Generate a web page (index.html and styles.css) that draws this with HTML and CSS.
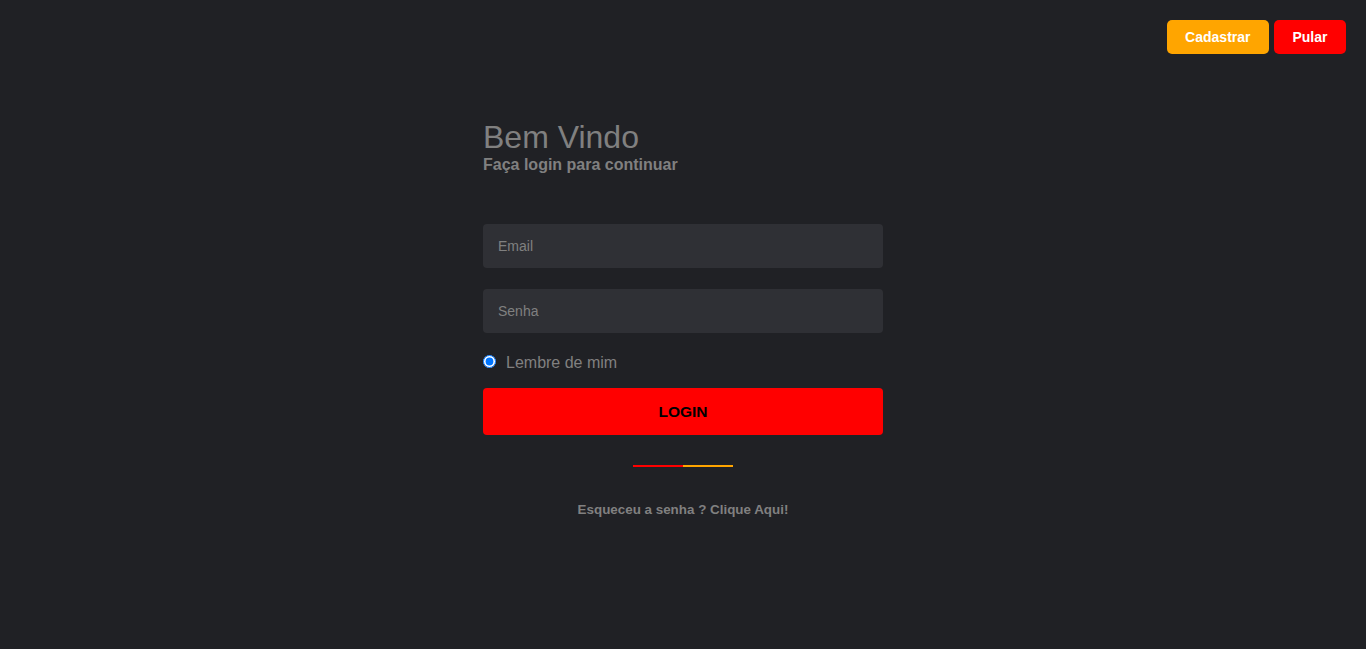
FILE: index.html
```html
<!DOCTYPE html>
<html lang="pt">
<head>
<meta charset="utf-8">
<title>Login</title>
<link rel="stylesheet" href="styles.css">
</head>
<body>
<header class="topbar">
  <button class="btn btn-orange">Cadastrar</button>
  <button class="btn btn-red">Pular</button>
</header>
<main class="login">
  <h1 class="title">Bem Vindo</h1>
  <p class="subtitle">Faça login para continuar</p>
  <form class="form">
    <input class="field" type="email" placeholder="Email">
    <input class="field" type="password" placeholder="Senha">
    <label class="remember"><input type="radio" checked class="radio"> Lembre de mim</label>
    <button type="button" class="login-btn">LOGIN</button>
  </form>
  <div class="divider"><span class="d-red"></span><span class="d-orange"></span></div>
  <p class="forgot">Esqueceu a senha ? Clique Aqui!</p>
</main>
</body>
</html>
```
FILE: styles.css
```css
html, body {
  margin: 0;
  padding: 0;
  background: #202125;
  font-family: "Liberation Sans", Arial, sans-serif;
  color: #808080;
  height: 100%;
}
.topbar {
  display: flex;
  justify-content: flex-end;
  gap: 5px;
  padding: 20px 20px 0 0;
}
.btn {
  font-family: "Liberation Sans", Arial, sans-serif;
  font-weight: bold;
  font-size: 14px;
  color: #fff;
  border: none;
  border-radius: 5px;
  height: 34px;
  padding: 0 18.5px;
}
.btn-orange { background: #ffa500; }
.btn-red { background: #ff0000; }
.login {
  width: 400px;
  margin: 0 auto;
  padding-top: 65px;
}
.title {
  font-size: 32px;
  font-weight: normal;
  margin: 0;
  line-height: 37px;
}
.subtitle {
  margin: 0;
  font-size: 16px;
  font-weight: bold;
  line-height: 18px;
}
.form {
  display: flex;
  flex-direction: column;
  margin-top: 50px;
}
.field {
  box-sizing: border-box;
  height: 44px;
  border: none;
  border-radius: 4px;
  background: #2f3035;
  padding: 0 15px;
  font-family: "Liberation Sans", Arial, sans-serif;
  font-size: 14px;
  color: #ccc;
  margin-bottom: 21px;
  outline: none;
}
.field::placeholder { color: #808080; }
.remember {
  display: flex;
  align-items: center;
  gap: 10px;
  font-size: 16px;
  margin-top: -1px;
  height: 20px;
}
.radio {
  margin: -3px 0 0 0;
  width: 13px;
  height: 13px;
}
.login-btn {
  margin-top: 15px;
  height: 47px;
  border: none;
  border-radius: 4px;
  background: #ff0000;
  color: #000;
  font-family: "Liberation Sans", Arial, sans-serif;
  font-weight: bold;
  font-size: 15.5px;
}
.divider {
  display: flex;
  justify-content: center;
  margin-top: 30px;
}
.divider span {
  display: block;
  width: 50px;
  height: 2px;
}
.d-red { background: #ff0000; }
.d-orange { background: #ffa500; }
.forgot {
  text-align: center;
  font-size: 13.4px;
  font-weight: bold;
  margin: 35px 0 0;
}
```
